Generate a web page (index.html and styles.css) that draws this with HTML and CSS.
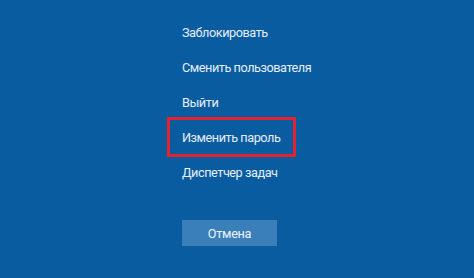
FILE: index.html
```html
<!DOCTYPE html>
<html lang="ru">
<head>
<meta charset="utf-8">
<link rel="stylesheet" href="styles.css">
</head>
<body>
<div class="screen">
  <ul class="menu">
    <li><span class="item">Заблокировать</span></li>
    <li><span class="item">Сменить пользователя</span></li>
    <li><span class="item">Выйти</span></li>
    <li><span class="item highlighted">Изменить пароль</span></li>
    <li><span class="item">Диспетчер задач</span></li>
  </ul>
  <button class="cancel">Отмена</button>
</div>
</body>
</html>
```

FILE: styles.css
```css
html, body {
  margin: 0;
  padding: 0;
  background: #0a5ca1;
}
.screen {
  width: 474px;
  height: 278px;
  box-sizing: border-box;
  padding: 15px 0 0 182px;
  font-family: Roboto, "Noto Sans", sans-serif;
  color: #e6eef6;
}
.menu {
  list-style: none;
  margin: 0;
  padding: 0;
  display: flex;
  flex-direction: column;
}
.menu li {
  height: 35px;
  line-height: 35px;
  font-size: 12.7px;
  letter-spacing: -0.45px;
}
.item {
  display: inline-block;
  position: relative;
}
.highlighted::after {
  content: "";
  position: absolute;
  top: -3px;
  bottom: -2px;
  left: -15px;
  right: -16px;
  border: 3px solid #e3222d;
}
.cancel {
  margin-top: 30px;
  width: 95px;
  height: 26px;
  border: none;
  padding: 0;
  background: #3b7fba;
  color: #eef4fa;
  font-family: Roboto, "Noto Sans", sans-serif;
  font-size: 12.7px;
  letter-spacing: -0.3px;
  display: block;
}
```
